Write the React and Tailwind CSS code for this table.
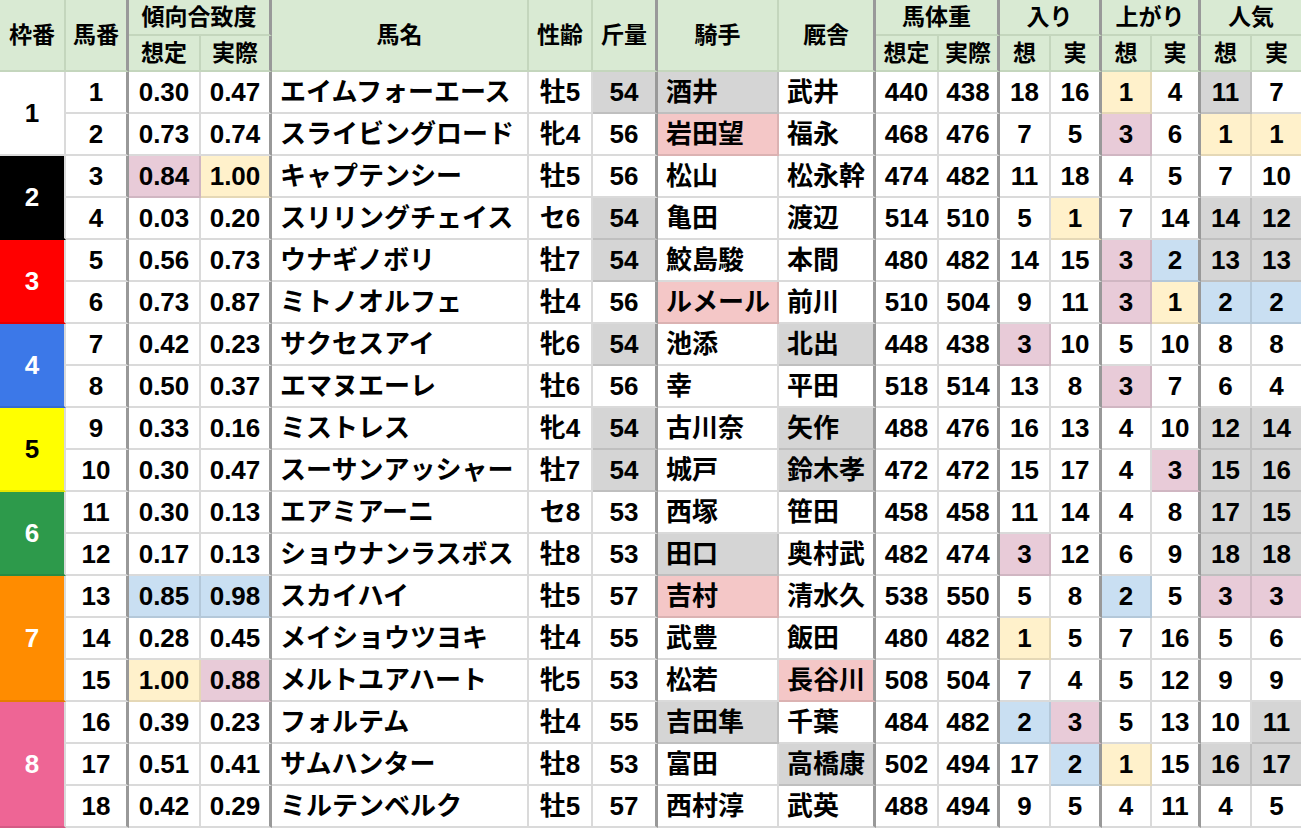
import React from 'react';

// 枠の色 (背景 / 文字)
const frames = [
  { n: 1, span: 'row-span-2', cls: 'bg-white text-black border-b-[#dadada]' },
  { n: 2, span: 'row-span-2', cls: 'bg-black text-white border-b-black/10' },
  { n: 3, span: 'row-span-2', cls: 'bg-[#ff0000] text-white border-b-black/10' },
  { n: 4, span: 'row-span-2', cls: 'bg-[#3c78e8] text-white border-b-black/10' },
  { n: 5, span: 'row-span-2', cls: 'bg-[#ffff00] text-black border-b-black/10' },
  { n: 6, span: 'row-span-2', cls: 'bg-[#2d9a4b] text-white border-b-black/10' },
  { n: 7, span: 'row-span-3', cls: 'bg-[#ff8c00] text-white border-b-black/10' },
  { n: 8, span: 'row-span-3', cls: 'bg-[#ee6595] text-white border-b-black/10' },
];
const frameStart = { 1: 0, 3: 1, 5: 2, 7: 3, 9: 4, 11: 5, 13: 6, 16: 7 };

// g=灰 p=ピンク y=黄 b=青 r=赤
const rows = [
  ['1', '0.30', '0.47', 'エイムフォーエース', '牡5', '54|g', '酒井|g', '武井', '440', '438', '18', '16', '1|y', '4', '11|g', '7'],
  ['2', '0.73', '0.74', 'スライビングロード', '牝4', '56', '岩田望|r', '福永', '468', '476', '7', '5', '3|p', '6', '1|y', '1|y'],
  ['3', '0.84|p', '1.00|y', 'キャプテンシー', '牡5', '56', '松山', '松永幹', '474', '482', '11', '18', '4', '5', '7', '10'],
  ['4', '0.03', '0.20', 'スリリングチェイス', 'セ6', '54|g', '亀田', '渡辺', '514', '510', '5', '1|y', '7', '14', '14|g', '12|g'],
  ['5', '0.56', '0.73', 'ウナギノボリ', '牡7', '54|g', '鮫島駿', '本間', '480', '482', '14', '15', '3|p', '2|b', '13|g', '13|g'],
  ['6', '0.73', '0.87', 'ミトノオルフェ', '牡4', '56', 'ルメール|r', '前川', '510', '504', '9', '11', '3|p', '1|y', '2|b', '2|b'],
  ['7', '0.42', '0.23', 'サクセスアイ', '牝6', '54|g', '池添', '北出|g', '448', '438', '3|p', '10', '5', '10', '8', '8'],
  ['8', '0.50', '0.37', 'エマヌエーレ', '牡6', '56', '幸', '平田', '518', '514', '13', '8', '3|p', '7', '6', '4'],
  ['9', '0.33', '0.16', 'ミストレス', '牝4', '54|g', '古川奈', '矢作|g', '488', '476', '16', '13', '4', '10', '12|g', '14|g'],
  ['10', '0.30', '0.47', 'スーサンアッシャー', '牡7', '54|g', '城戸', '鈴木孝|g', '472', '472', '15', '17', '4', '3|p', '15|g', '16|g'],
  ['11', '0.30', '0.13', 'エアミアーニ', 'セ8', '53', '西塚', '笹田', '458', '458', '11', '14', '4', '8', '17|g', '15|g'],
  ['12', '0.17', '0.13', 'ショウナンラスボス', '牡8', '53', '田口|g', '奥村武', '482', '474', '3|p', '12', '6', '9', '18|g', '18|g'],
  ['13', '0.85|b', '0.98|b', 'スカイハイ', '牡5', '57', '吉村|r', '清水久', '538', '550', '5', '8', '2|b', '5', '3|p', '3|p'],
  ['14', '0.28', '0.45', 'メイショウツヨキ', '牡4', '55', '武豊', '飯田', '480', '482', '1|y', '5', '7', '16', '5', '6'],
  ['15', '1.00|y', '0.88|p', 'メルトユアハート', '牝5', '53', '松若', '長谷川|r', '508', '504', '7', '4', '5', '12', '9', '9'],
  ['16', '0.39', '0.23', 'フォルテム', '牡4', '55', '吉田隼|g', '千葉', '484', '482', '2|b', '3|p', '5', '13', '10', '11|g'],
  ['17', '0.51', '0.41', 'サムハンター', '牡8', '53', '富田', '高橋康|g', '502', '494', '17', '2|b', '1|y', '15', '16|g', '17|g'],
  ['18', '0.42', '0.29', 'ミルテンベルク', '牡5', '57', '西村淳', '武英', '488', '494', '9', '5', '4', '11', '4', '5'],
];

const fills = {
  g: 'bg-[#d5d5d5]',
  p: 'bg-[#e8cbd8]',
  y: 'bg-[#fff1cb]',
  b: 'bg-[#c9dff2]',
  r: 'bg-[#f4c7c7]',
};

// 列1(馬番)以降の太線
const thick = [true, false, true, false, false, true, false, true, false, true, false, true, false, true, false, false];
// 左寄せの列 (馬名・騎手・厩舎)
const leftCols = [3, 6, 7];

function HeadCell({ children, className = '' }) {
  return (
    <div className={`flex items-center justify-center bg-[#d9ead3] border-b-2 border-b-[#c4d6bd] text-[23px] ${className}`}>
      {children}
    </div>
  );
}

function BodyCell({ raw, col }) {
  const [text, fill] = raw.split('|');
  const right = thick[col]
    ? 'border-r-[3px] border-r-[#999]'
    : col === 15
    ? ''
    : fill
    ? 'border-r-2 border-r-black/10'
    : 'border-r-2 border-r-[#dadada]';
  const bottom = fill ? 'border-b-2 border-b-black/10' : 'border-b-2 border-b-[#dadada]';
  const align = leftCols.includes(col) ? 'justify-start pl-2' : 'justify-center';
  return (
    <div className={`flex items-center text-[26px] ${align} ${right} ${bottom} ${fill ? fills[fill] : 'bg-white'}`}>
      {text}
    </div>
  );
}

export default function App() {
  const gr = 'border-r-2 border-r-[#c4d6bd]';
  const tk = 'border-r-[3px] border-r-[#999]';
  return (
    <div
      className="w-[1301px] h-[829px] overflow-hidden bg-white text-black font-bold leading-none"
      style={{ fontFamily: '"Liberation Sans", "Noto Sans CJK JP", sans-serif' }}
    >
      <div className="grid grid-cols-[66px_63px_72px_71px_257px_64px_65px_121px_97px_63px_61px_51px_51px_50px_49px_51px_49px] grid-rows-[36px_36px_repeat(18,42px)]">
        <HeadCell className={`row-span-2 ${gr}`}>枠番</HeadCell>
        <HeadCell className={`row-span-2 ${tk}`}>馬番</HeadCell>
        <HeadCell className={`col-span-2 ${tk}`}>傾向合致度</HeadCell>
        <HeadCell className={`row-span-2 ${gr}`}>馬名</HeadCell>
        <HeadCell className={`row-span-2 ${gr}`}>性齢</HeadCell>
        <HeadCell className={`row-span-2 ${tk}`}>斤量</HeadCell>
        <HeadCell className={`row-span-2 ${gr}`}>騎手</HeadCell>
        <HeadCell className={`row-span-2 ${tk}`}>厩舎</HeadCell>
        <HeadCell className={`col-span-2 ${tk}`}>馬体重</HeadCell>
        <HeadCell className={`col-span-2 ${tk}`}>入り</HeadCell>
        <HeadCell className={`col-span-2 ${tk}`}>上がり</HeadCell>
        <HeadCell className="col-span-2">人気</HeadCell>

        <HeadCell className={gr}>想定</HeadCell>
        <HeadCell className={tk}>実際</HeadCell>
        <HeadCell className={gr}>想定</HeadCell>
        <HeadCell className={tk}>実際</HeadCell>
        <HeadCell className={gr}>想</HeadCell>
        <HeadCell className={tk}>実</HeadCell>
        <HeadCell className={gr}>想</HeadCell>
        <HeadCell className={tk}>実</HeadCell>
        <HeadCell className={gr}>想</HeadCell>
        <HeadCell>実</HeadCell>

        {rows.map((row, i) => {
          const fIdx = frameStart[i + 1];
          const f = fIdx !== undefined ? frames[fIdx] : null;
          return (
            <React.Fragment key={i}>
              {f && (
                <div className={`${f.span} ${f.cls} flex items-center justify-center text-[26px] border-b-2 border-r-2 border-r-[#dadada]`}>
                  {f.n}
                </div>
              )}
              {row.map((cell, c) => (
                <BodyCell key={c} raw={cell} col={c} />
              ))}
            </React.Fragment>
          );
        })}
      </div>
    </div>
  );
}
